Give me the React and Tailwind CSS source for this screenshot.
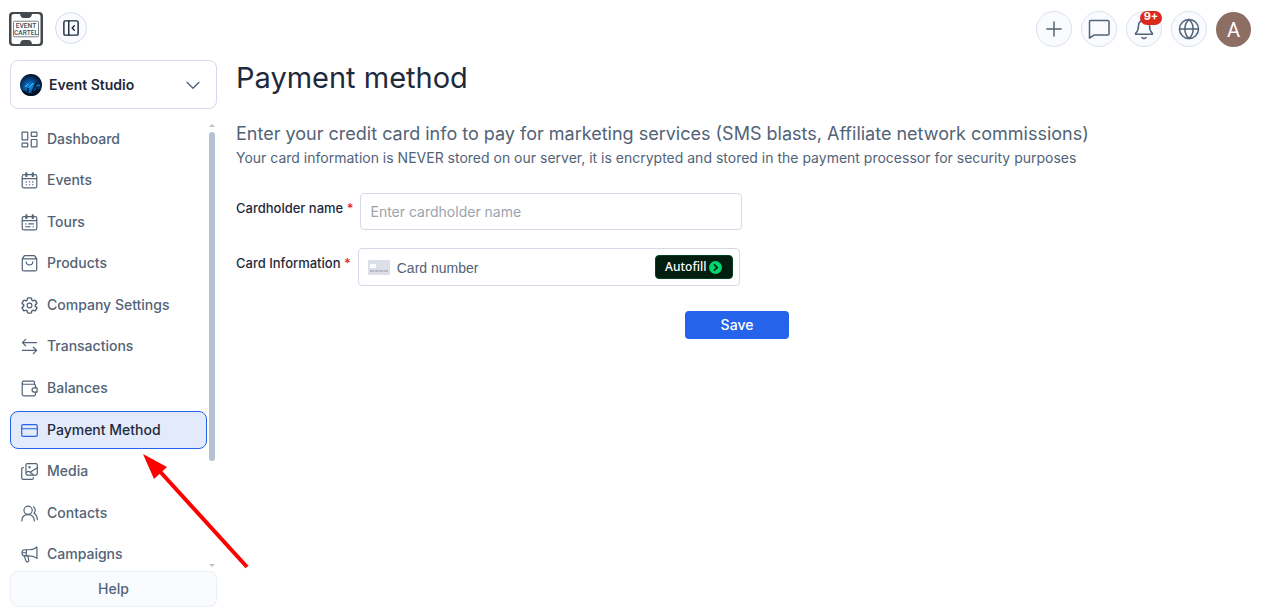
import React from "react";

function Icon({ children, className = "size-[17px]", width = 1.5 }) {
  return (
    <svg
      viewBox="0 0 24 24"
      className={`${className} shrink-0`}
      fill="none"
      stroke="currentColor"
      strokeWidth={width}
      strokeLinecap="round"
      strokeLinejoin="round"
      aria-hidden="true"
    >
      {children}
    </svg>
  );
}

const calendarFrame = (
  <>
    <rect x="1.700" y="3.700" width="20.600" height="18.800" rx="2.500" />
    <path d="M2 9.300h20M7 1.200v5M8.200 1.200v5M16 1.200v5M17.200 1.200v5" />
  </>
);

const navItems = [
  {
    label: "Dashboard",
    icon: (
      <>
        <rect x="1.500" y="1.500" width="8" height="11" rx="0.600" />
        <rect x="14.500" y="1.500" width="8" height="6" rx="0.600" />
        <rect x="1.500" y="17" width="8" height="5.500" rx="0.600" />
        <rect x="14.500" y="12" width="8" height="10.500" rx="0.600" />
      </>
    ),
  },
  {
    label: "Events",
    icon: (
      <>
        {calendarFrame}
        <path d="M7.200 14h.6M11.700 14h.6M16.200 14h.6M7.200 18h.6M11.700 18h.6M16.200 18h.6" />
      </>
    ),
  },
  {
    label: "Tours",
    icon: (
      <>
        {calendarFrame}
        <path d="M6.500 14h.5M11 14h6.500M6.500 18h6.500M17 18h.5" />
      </>
    ),
  },
  {
    label: "Products",
    icon: (
      <>
        <path d="M1.800 5.500 4 2Q4.600 1 5.800 1h12.400q1.200 0 1.800 1l2.200 3.500v14.800a2.200 2.200 0 0 1-2.200 2.200H4a2.200 2.200 0 0 1-2.200-2.200zM2 5.500h20" />
        <path d="M7.300 9.500c.5 6 8.900 6 9.400 0" />
      </>
    ),
  },
  {
    label: "Company Settings",
    icon: (
      <>
        <path d="M9.594 3.940c.09-.542.560-.940 1.110-.940h2.593c.55 0 1.020.398 1.110.940l.213 1.281c.063.374.313.686.645.870.074.040.147.083.220.127.325.196.720.257 1.075.124l1.217-.456a1.125 1.125 0 0 1 1.370.490l1.296 2.247a1.125 1.125 0 0 1-.260 1.431l-1.003.827c-.293.241-.438.613-.430.992a7.723 7.723 0 0 1 0 .255c-.008.378.137.750.430.991l1.004.827c.424.350.534.955.260 1.430l-1.298 2.247a1.125 1.125 0 0 1-1.369.491l-1.217-.456c-.355-.133-.750-.072-1.076.124a6.470 6.470 0 0 1-.220.128c-.331.183-.581.495-.644.869l-.213 1.281c-.090.543-.560.940-1.110.940h-2.594c-.550 0-1.019-.398-1.110-.940l-.213-1.281c-.062-.374-.312-.686-.644-.870a6.520 6.520 0 0 1-.220-.127c-.325-.196-.720-.257-1.076-.124l-1.217.456a1.125 1.125 0 0 1-1.369-.490l-1.297-2.247a1.125 1.125 0 0 1 .260-1.431l1.004-.827c.292-.240.437-.613.430-.991a6.932 6.932 0 0 1 0-.255c.007-.380-.138-.751-.430-.992l-1.004-.827a1.125 1.125 0 0 1-.260-1.430l1.297-2.247a1.125 1.125 0 0 1 1.370-.491l1.216.456c.356.133.751.072 1.076-.124.072-.044.146-.086.220-.128.332-.183.582-.495.644-.869l.214-1.280z" transform="translate(-2.400 -2.400) scale(1.200)" />
        <circle cx="12" cy="12" r="3.400" />
      </>
    ),
  },
  {
    label: "Transactions",
    icon: <path d="M22 6.500H2M6.500 2 2 6.500 6.500 11M2 17.500h20M17.500 13l4.500 4.500-4.500 4.500" />,
  },
  {
    label: "Balances",
    icon: (
      <>
        <path d="M20.500 11V8.500A2.500 2.500 0 0 0 18 6H4a2.200 2.200 0 0 1 0-4.400h13.500A1.500 1.500 0 0 1 19 3v3M1.700 4v16.200a2.200 2.200 0 0 0 2.200 2.200h14.400a2.200 2.200 0 0 0 2.200-2.200V17" />
        <path d="M22.700 11.200h-4.200a2.900 2.900 0 0 0 0 5.800h4.200z" />
      </>
    ),
  },
  {
    label: "Payment Method",
    active: true,
    icon: (
      <>
        <rect x="1" y="3.800" width="22" height="16.600" rx="2" />
        <path d="M1 9.500h22" />
      </>
    ),
  },
  {
    label: "Media",
    icon: (
      <>
        <rect x="7" y="1" width="16" height="16" rx="2" />
        <path d="M3.500 6.500H3a2 2 0 0 0-2 2V21a2 2 0 0 0 2 2h12.500a2 2 0 0 0 2-2v-.5" />
        <circle cx="12" cy="6" r="0.800" />
        <path d="M7.500 13.500q2.500-3 5.500-.5t4 3.500M14 12.500l8.500-5.500" />
      </>
    ),
  },
  {
    label: "Contacts",
    icon: (
      <>
        <circle cx="10" cy="7.500" r="5.800" />
        <path d="M1.200 22.500c0-5.500 3.300-9 8.800-9s8.800 3.500 8.800 9" />
        <path d="M17.500 2.500c3 2 3.500 6.500.8 9.200 3 1.800 4.700 5.200 4.700 9" />
      </>
    ),
  },
  {
    label: "Campaigns",
    icon: (
      <>
        <path d="M22.500 1.500v16c-3-2.500-6.500-3.700-10.700-3.700H5a3.500 3.500 0 0 1-3.500-3.500V8.800A3.500 3.500 0 0 1 5 5.300h6.800c4.200 0 7.700-1.200 10.700-3.800z" />
        <path d="M7.500 5.500v8M2 9.500h5.500M4.500 14l2.500 7q.6 1.800 2.300 1.500 2-.4 1.700-2.300L9.500 14" />
      </>
    ),
  },
];

function Logo() {
  return (
    <svg viewBox="0 0 34 34" className="size-[34px] shrink-0" role="img" aria-label="Event Cartel">
      <rect width="34" height="34" rx="4" fill="#43494d" />
      <path
        d="M5 2H11q.7 4 3.500 4h5Q22.300 6 23 2h6Q31.500 2 31.500 4.500v25q0 2.500-2.500 2.500H23q-.7-4-3.500-4h-5Q11.700 28 11 32H5Q2.500 32 2.500 29.500v-25Q2.500 2 5 2z"
        fill="#fff"
      />
      <rect x="4.500" y="9.200" width="25" height="15.600" rx="1" fill="none" stroke="#6b7073" strokeWidth="0.900" />
      <g fill="#43494d" fontFamily="Roboto, sans-serif" fontWeight="500" fontSize="6.600" textAnchor="middle">
        <text x="17" y="16">EVENT</text>
        <text x="17" y="22.800">CARTEL</text>
      </g>
    </svg>
  );
}

function StudioAvatar() {
  return (
    <svg viewBox="0 0 22 22" className="size-[22px] shrink-0" aria-hidden="true">
      <defs>
        <radialGradient id="stage" cx="45%" cy="58%" r="55%">
          <stop offset="0" stopColor="#1294e6" />
          <stop offset="0.500" stopColor="#07539a" />
          <stop offset="1" stopColor="#04132e" />
        </radialGradient>
        <clipPath id="round">
          <circle cx="11" cy="11" r="11" />
        </clipPath>
      </defs>
      <g clipPath="url(#round)">
        <rect width="22" height="22" fill="url(#stage)" />
        <path d="M0 18q4-3 7 0t7-1 8 0v6H0z" fill="#031024" />
        <path d="M5 13l3-3M11 12l2-3" stroke="#5cc4f5" strokeWidth="1" />
        <path d="M12 18l5-10M16 19l1-6M8 18v-4" stroke="#03142c" strokeWidth="1.500" />
        <path d="M17 12q2-2 3 0" fill="none" stroke="#1a9be0" />
      </g>
    </svg>
  );
}

function RoundButton({ label, children }) {
  return (
    <button
      type="button"
      aria-label={label}
      className="relative flex size-9 items-center justify-center rounded-full border border-[#d9e1ec] bg-[#fafbff] text-[#526377]"
    >
      {children}
    </button>
  );
}

function Header() {
  return (
    <header className="flex h-[60px] shrink-0 items-start justify-between pl-[9px] pr-[10px] pt-[11px]">
      <div className="flex items-start gap-3 pt-px">
        <Logo />
        <button
          type="button"
          aria-label="Collapse menu"
          className="flex size-8 items-center justify-center rounded-full border border-[#d3dcea] bg-[#fafbff] text-[#1e2a3b]"
        >
          <Icon className="size-[18px]" width={1.9}>
            <rect x="2.500" y="2.500" width="19" height="19" rx="2" />
            <path d="M9 2.500v19M16.500 9l-3 3 3 3" />
          </Icon>
        </button>
      </div>
      <div className="flex items-center gap-[9px]">
        <RoundButton label="Add">
          <Icon className="size-5" width={1.800}>
            <path d="M12 3.500v17M3.500 12h17" />
          </Icon>
        </RoundButton>
        <RoundButton label="Messages">
          <Icon className="size-6">
            <path d="M3.700 3.500h17a1.300 1.300 0 0 1 1.300 1.300v12a1.300 1.300 0 0 1-1.300 1.300H7L2.500 21V4.800a1.300 1.300 0 0 1 1.200-1.300z" />
          </Icon>
        </RoundButton>
        <RoundButton label="Notifications">
          <Icon className="size-6">
            <path d="M12 3a5.500 5.500 0 0 0-5.500 5.500c0 4-1 6-2.800 7.800-.5.600-.2 1 .5 1h15.600c.7 0 1-.4.500-1-1.800-1.800-2.800-3.800-2.800-7.800A5.500 5.500 0 0 0 12 3zM10 20.500q2 2 4 0" />
          </Icon>
          <span className="absolute -top-px right-[-1px] flex h-[14px] w-[22px] items-center justify-center rounded-full bg-[#dc291e] pb-1 font-['Inter',sans-serif] text-[11px] font-bold leading-none text-white">
            9+
          </span>
        </RoundButton>
        <RoundButton label="Language">
          <Icon className="size-6">
            <circle cx="12" cy="12" r="9.500" />
            <path d="M2.500 12h19M12 2.500c-5.500 5-5.500 14 0 19M12 2.500c5.500 5 5.500 14 0 19" />
          </Icon>
        </RoundButton>
        <button
          type="button"
          aria-label="Account"
          className="flex size-[35px] items-center justify-center rounded-full bg-[#8d6e63] pt-0.5 font-['Roboto',sans-serif] text-[20px] leading-none text-white"
        >
          A
        </button>
      </div>
    </header>
  );
}

function Sidebar() {
  return (
    <aside className="flex w-[207px] shrink-0 flex-col pb-[5px]">
      <button
        type="button"
        className="flex h-[49px] shrink-0 items-center gap-[7px] rounded-lg border border-[#d3dcea] pl-[9px] pr-[15px] text-left text-[14px] font-semibold text-[#1e2a3b]"
      >
        <StudioAvatar />
        <span className="grow">Event Studio</span>
        <Icon className="size-4 text-[#526377]" width={2}>
          <path d="M3 8l9 9 9-9" />
        </Icon>
      </button>
      <div className="mt-[11px] flex min-h-0 grow gap-[2px] overflow-hidden">
        <nav className="grow" aria-label="Main">
          <ul className="flex h-[454px] flex-col justify-between">
            {navItems.map((item) => (
              <li key={item.label}>
                <a
                  href="#"
                  aria-current={item.active ? "page" : undefined}
                  className={
                    item.active
                      ? "flex h-[38px] items-center gap-[9px] rounded-lg border border-[#2563eb] bg-[#e3eafb] px-[10px] text-[14px] font-medium text-[#1e2a3b]"
                      : "flex h-[38px] items-center gap-[9px] rounded-lg border border-transparent px-[10px] text-[14px] font-medium text-[#526377]"
                  }
                >
                  <span className={item.active ? "text-[#2563eb]" : ""}>
                    <Icon width={1.700}>{item.icon}</Icon>
                  </span>
                  <span className="pb-0.5">{item.label}</span>
                </a>
              </li>
            ))}
          </ul>
        </nav>
        <div className="mr-[2px] flex w-[6px] shrink-0 flex-col items-center pb-1 pt-1" aria-hidden="true">
          <svg viewBox="0 0 6 3" className="h-[3px] w-[6px] shrink-0">
            <path d="M0 3l3-3 3 3z" fill="#b6c2d1" />
          </svg>
          <div className="my-[5px] min-h-0 w-full grow">
            <div className="h-[77%] w-full rounded-full bg-[#b6c2d1]" />
          </div>
          <svg viewBox="0 0 6 3" className="h-[3px] w-[6px] shrink-0">
            <path d="M0 0l3 3 3-3z" fill="#b6c2d1" />
          </svg>
        </div>
      </div>
      <button
        type="button"
        className="h-9 shrink-0 rounded-lg border border-[#ebf0f7] bg-[#fafbff] pb-0.5 text-[14px] font-medium text-[#526377]"
      >
        Help
      </button>
    </aside>
  );
}

function CardGlyph() {
  return (
    <svg viewBox="0 0 22 15" className="h-[15px] w-[22px] shrink-0" aria-hidden="true">
      <rect width="22" height="15" rx="1.500" fill="#dcdfe8" />
      <rect x="2" y="4" width="6" height="4" rx="0.800" fill="#fff" />
      <path d="M2 11h18" stroke="#b5bac7" strokeWidth="1.800" strokeDasharray="3.900 0.800" />
    </svg>
  );
}

function PaymentMethod() {
  return (
    <main className="min-w-0 grow">
      <h1 className="text-[29px] leading-9 text-[#1e2a3b]">Payment method</h1>
      <h2 className="mt-[26px] text-[18px] leading-6 text-[#526377]">
        Enter your credit card info to pay for marketing services (SMS blasts, Affiliate network commissions)
      </h2>
      <p className="text-[14px] leading-6 text-[#526377]">
        Your card information is NEVER stored on our server, it is encrypted and stored in the payment processor for
        security purposes
      </p>
      <form className="mt-[23px]" onSubmit={(e) => e.preventDefault()}>
        <div className="flex items-start gap-[7px]">
          <label htmlFor="holder" className="pt-[5px] text-[13px] font-medium leading-5 text-[#1e2a3b]">
            Cardholder name <span className="text-[#dc291e]">*</span>
          </label>
          <input
            id="holder"
            placeholder="Enter cardholder name"
            className="h-[37px] w-[382px] rounded border border-[#d5dae6] px-[9px] text-[14px] text-[#1e2a3b] placeholder:text-[#9ba3af]"
          />
        </div>
        <div className="mt-[18px] flex items-start gap-[7px]">
          <label htmlFor="card" className="pt-[5px] text-[13px] font-medium leading-5 text-[#1e2a3b]">
            Card Information <span className="text-[#dc291e]">*</span>
          </label>
          <div className="flex h-[38px] w-[382px] items-center gap-[7px] rounded border border-[#d5dae6] pl-[9px] pr-[6px]">
            <CardGlyph />
            <input
              id="card"
              placeholder="Card number"
              className="min-w-0 grow pt-0.5 font-['Liberation_Sans',Arial,sans-serif] text-[14px] text-[#1e2a3b] placeholder:text-[#526377]"
            />
            <button
              type="button"
              className="flex h-6 w-[78px] items-center justify-center gap-[3px] rounded border border-[#00451f] bg-[#011e0f] font-['Noto_Sans',sans-serif] text-[12px] font-medium text-white"
            >
              Autofill
              <svg viewBox="0 0 12 12" className="size-[13px]" aria-hidden="true">
                <circle cx="6" cy="6" r="6" fill="#00d66f" />
                <path d="M4.500 3l3 3-3 3" fill="none" stroke="#011e0f" strokeWidth="1.600" />
              </svg>
            </button>
          </div>
        </div>
        <div className="mt-[25px] flex justify-center">
          <button
            type="submit"
            className="h-7 w-[104px] rounded bg-[#2563eb] pb-0.5 text-[14px] font-medium text-white"
          >
            Save
          </button>
        </div>
      </form>
    </main>
  );
}

export default function App() {
  return (
    <div className="flex h-screen flex-col bg-white font-['Inter',sans-serif]">
      <Header />
      <div className="flex min-h-0 grow gap-[19px] pl-[10px] pr-[23px]">
        <Sidebar />
        <PaymentMethod />
      </div>
      <svg
        viewBox="0 0 110 118"
        className="pointer-events-none absolute left-[141px] top-[452px] h-[118px] w-[110px]"
        aria-hidden="true"
      >
        <path d="M14 14L106 115" stroke="#fe0000" strokeWidth="4" />
        <path d="M2 2L26 15L13 27z" fill="#fe0000" />
      </svg>
    </div>
  );
}
